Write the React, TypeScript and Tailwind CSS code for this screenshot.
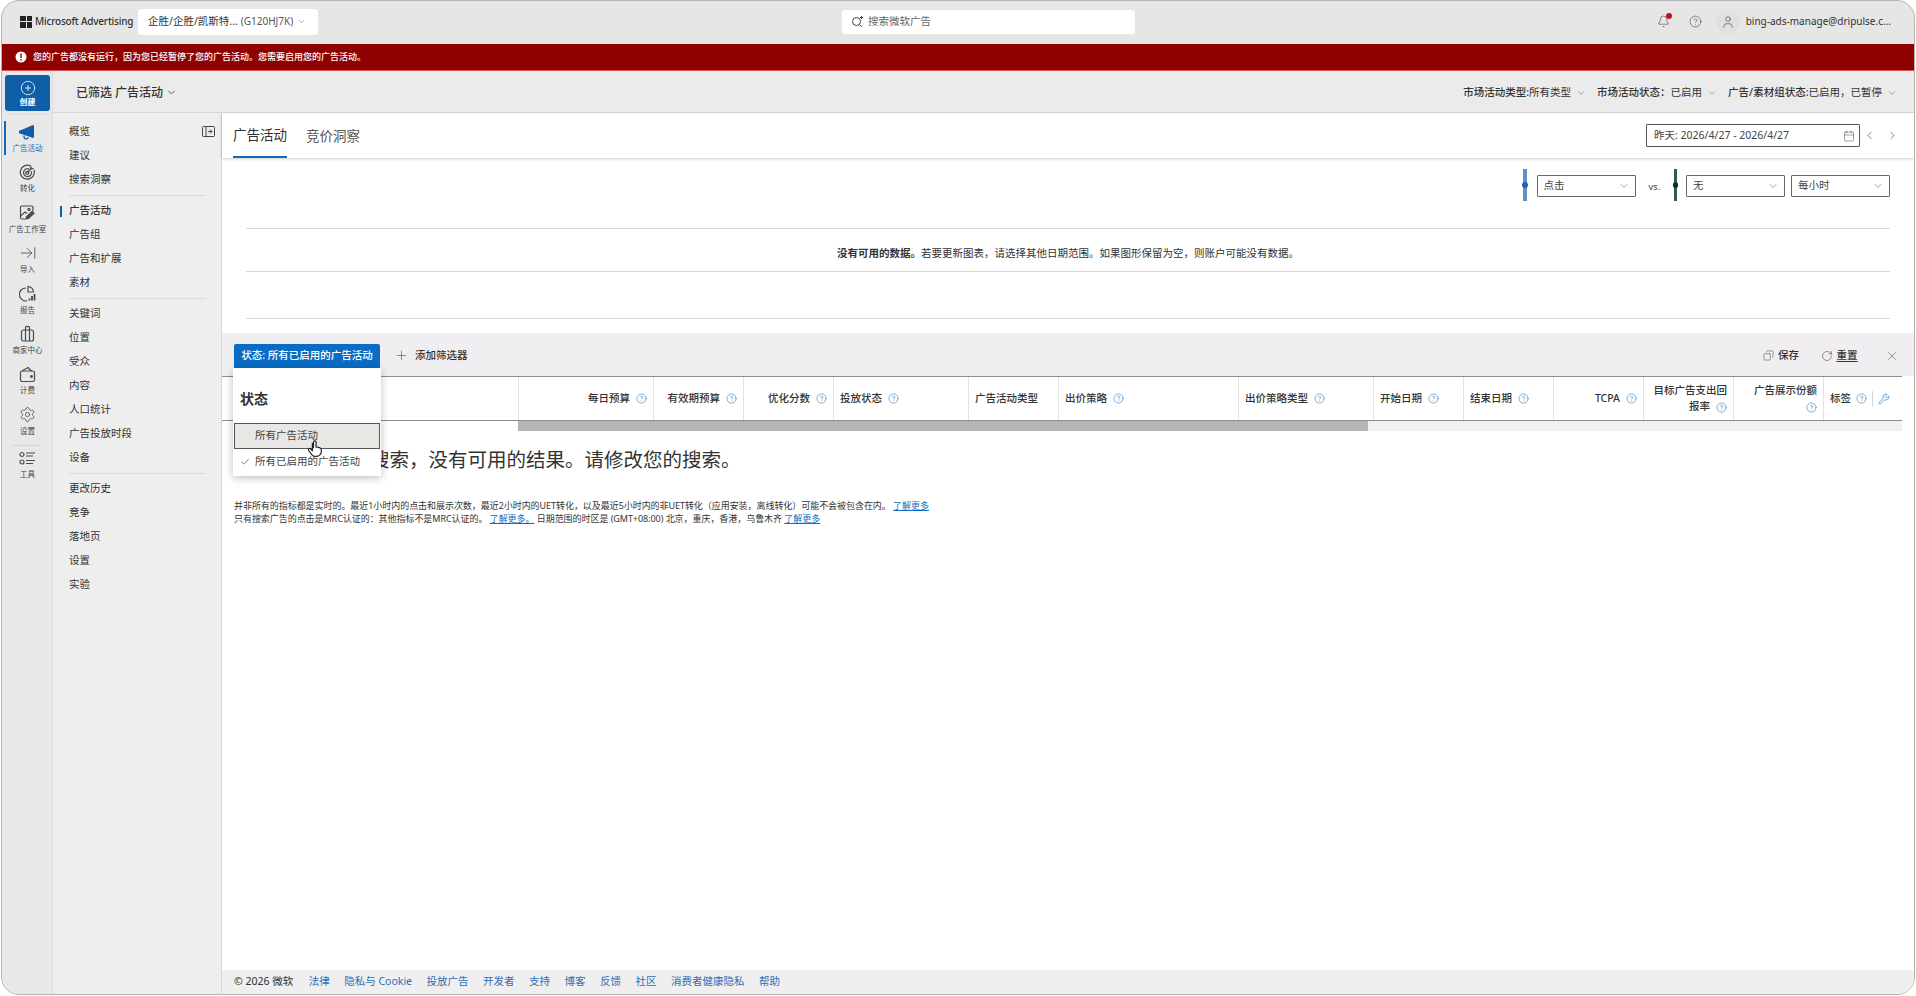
import {
  ArrowRightToLine,
  Bell,
  Calendar,
  Check,
  ChevronDown,
  ChevronLeft,
  ChevronRight,
  CircleHelp,
  CirclePlus,
  Copy,
  Plus,
  RotateCw,
  Settings,
  User,
  Wrench,
  X,
} from 'lucide-react'
import type { ReactNode } from 'react'

// full-width punctuation, kept as escapes so it survives copying around
const COMMA = '\uFF0C'
const COLON = '\uFF1A'
const LP = '\uFF08'
const RP = '\uFF09'

const MegaphoneIcon = () => (
  <svg width="18" height="16" viewBox="0 0 18 16" className="text-[#0f5fa8]">
    <path d="M1 6.5 13.5 1.2a1 1 0 0 1 1.5.9v10.8a1 1 0 0 1-1.5.9L1 9.5a1.5 1.5 0 0 1 0-3Z" fill="currentColor" />
    <path d="M5 11.5v1.3a2.2 2.2 0 0 0 4.3.6" fill="none" stroke="currentColor" strokeWidth="1.3" />
  </svg>
)

const TargetIcon = () => (
  <svg width="17" height="17" viewBox="0 0 17 17" fill="none" stroke="#4a4a4a" strokeWidth="1.2">
    <path d="M12 2.2A7 7 0 1 0 15 6" />
    <path d="M10.4 5A4 4 0 1 0 12.4 7.4" />
    <circle cx="8.2" cy="8.8" r="1.5" />
    <path d="M8.4 8.6 13 4M12 2.6V4.6H14.6" strokeWidth="1.4" />
  </svg>
)

const StudioIcon = () => (
  <svg width="17" height="17" viewBox="0 0 17 17" fill="none" stroke="#4a4a4a" strokeWidth="1.2">
    <path d="M6 15H3a1.5 1.5 0 0 1-1.5-1.5v-10A1.5 1.5 0 0 1 3 2h9.500A1.500 1.500 0 0 1 14 3.500V7" />
    <circle cx="10" cy="5.500" r="1.100" />
    <path d="M1.500 12 6 8l2 1.500" />
    <path d="m7 15 .6-2.400 5.600-5.200 1.800 1.800-5.600 5.200Z" fill="#4a4a4a" />
  </svg>
)

const ReportIcon = () => (
  <svg width="17" height="17" viewBox="0 0 17 17" fill="none" stroke="#4a4a4a" strokeWidth="1.2">
    <path d="M7 3a6.500 6.500 0 1 0 1 12.900" />
    <path d="M9 1.500A6 6 0 0 1 14.500 7H9Z" />
    <path d="M10.500 15.500v-2M13 15.500v-4.500M15.500 15.500V9" strokeWidth="1.800" />
  </svg>
)

const GiftIcon = () => (
  <svg width="15" height="17" viewBox="0 0 15 17" fill="none" stroke="#4a4a4a" strokeWidth="1.2">
    <rect x="1.500" y="5" width="12" height="11" rx="2" />
    <path d="M5.500 5v11M9.500 5v11M5.500 5V2.500a1.200 1.200 0 0 1 2-.8 1.200 1.200 0 0 1 2 .8V5" />
  </svg>
)

const WalletIcon = () => (
  <svg width="17" height="17" viewBox="0 0 17 17" fill="none" stroke="#4a4a4a" strokeWidth="1.2">
    <rect x="1.500" y="5" width="14" height="10.500" rx="1.800" />
    <path d="M3 5 9 1.500 12.500 5" />
    <circle cx="12.500" cy="10.500" r=".8" fill="#4a4a4a" />
  </svg>
)

const ToolsIcon = () => (
  <svg width="17" height="15" viewBox="0 0 17 15" fill="none" stroke="#4a4a4a" strokeWidth="1.2">
    <circle cx="3" cy="3.500" r="2" />
    <circle cx="3" cy="11" r="2" />
    <path d="M7 2h9M7 5h7M7 9.500h9M7 12.500h7" />
  </svg>
)

const CollapseIcon = () => (
  <svg width="13" height="11" viewBox="0 0 13 11" fill="none" stroke="#444" strokeWidth="1" className="absolute top-[13px] left-[149px]">
    <rect x=".5" y=".5" width="12" height="10" rx="1" />
    <path d="M4 .5v10M6 5.500h4M8 3.500l2 2-2 2" />
  </svg>
)

const railItems: { label: string; icon: ReactNode; active?: boolean }[] = [
  { label: '广告活动', icon: <MegaphoneIcon />, active: true },
  { label: '转化', icon: <TargetIcon /> },
  { label: '广告工作室', icon: <StudioIcon /> },
  { label: '导入', icon: <ArrowRightToLine size={18} strokeWidth={1.1} color="#4a4a4a" /> },
  { label: '报告', icon: <ReportIcon /> },
  { label: '商家中心', icon: <GiftIcon /> },
  { label: '计费', icon: <WalletIcon /> },
  { label: '设置', icon: <Settings size={17} strokeWidth={1.1} color="#4a4a4a" /> },
]

const navGroups = [
  ['概览', '建议', '搜索洞察'],
  ['广告活动', '广告组', '广告和扩展', '素材'],
  ['关键词', '位置', '受众', '内容', '人口统计', '广告投放时段', '设备'],
  ['更改历史', '竞争', '落地页', '设置', '实验'],
]

const columns: { width: string; label: string; second?: string; align: 'left' | 'right'; help?: boolean }[] = [
  { width: 'w-[135px]', label: '每日预算', align: 'right', help: true },
  { width: 'w-[90px]', label: '有效期预算', align: 'right', help: true },
  { width: 'w-[90px]', label: '优化分数', align: 'right', help: true },
  { width: 'w-[135px]', label: '投放状态', align: 'left', help: true },
  { width: 'w-[90px]', label: '广告活动类型', align: 'left' },
  { width: 'w-[180px]', label: '出价策略', align: 'left', help: true },
  { width: 'w-[135px]', label: '出价策略类型', align: 'left', help: true },
  { width: 'w-[90px]', label: '开始日期', align: 'left', help: true },
  { width: 'w-[90px]', label: '结束日期', align: 'left', help: true },
  { width: 'w-[90px]', label: 'TCPA', align: 'right', help: true },
  { width: 'w-[90px]', label: '目标广告支出回', second: '报率', align: 'right', help: true },
  { width: 'w-[90px]', label: '广告展示份额', second: '', align: 'right', help: true },
]

const footerLinks = ['法律', '隐私与 Cookie', '投放广告', '开发者', '支持', '博客', '反馈', '社区', '消费者健康隐私', '帮助']

const Help = () => <CircleHelp size={11} strokeWidth={1.3} className="shrink-0 text-[#2b79c2]" />

function Rail() {
  return (
    <div className="flex w-[51px] shrink-0 flex-col border-r border-[#dcdcdc] bg-[#e8e8e8] pt-[4px]">
      <div className="ml-[3px] flex h-[36px] w-[45px] flex-col items-center justify-center rounded-[3px] bg-[#0f5fa8] text-white">
        <CirclePlus size={16} strokeWidth={1.2} />
        <span className="mt-[1px] text-[8px] leading-[10px] font-bold">创建</span>
      </div>
      <div className="mx-[4px] mt-[3px] mb-[4px] border-t border-[#dcdcdc]" />
      {railItems.map((item) => (
        <div key={item.label} className="relative flex h-[40.4px] flex-col items-center pt-[4px] pl-[1px]">
          {item.active && <div className="absolute top-[2px] left-[2px] h-[34px] w-[1.5px] bg-[#0f6cbd]" />}
          <div className="flex h-[18px] items-center">{item.icon}</div>
          <span className={`mt-[2px] text-[7.5px] leading-[10px] ${item.active ? 'text-[#2b6cb0]' : 'text-[#444]'}`}>
            {item.label}
          </span>
        </div>
      ))}
      <div className="mx-[10px] my-[3px] border-t border-[#d6d6d6]" />
      <div className="flex flex-col items-center pt-[2px] pl-[1px]">
        <ToolsIcon />
        <span className="mt-[3px] text-[7.5px] leading-[10px] text-[#444]">工具</span>
      </div>
    </div>
  )
}

function SideNav() {
  return (
    <div className="relative w-[169px] shrink-0 border-r border-[#d8d8d8] bg-[#eeeeee] pt-[7px] pl-[16px] text-[10.5px] text-[#333]">
      <CollapseIcon />
      {navGroups.map((group, i) => (
        <div key={i} className={`w-[137px] ${i > 0 ? 'mt-[3px] border-t border-[#d9d9d9] pt-[3px]' : ''}`}>
          {group.map((name) => (
            <div key={name} className="relative flex h-[24px] items-center">
              {i === 1 && name === '广告活动' && (
                <div className="absolute top-[7px] left-[-9px] h-[11px] w-[2px] bg-[#0f5fa8]" />
              )}
              <span className={i === 1 && name === '广告活动' ? 'font-medium' : ''}>{name}</span>
            </div>
          ))}
        </div>
      ))}
    </div>
  )
}

function Select({ value, width }: { value: string; width: string }) {
  return (
    <div className={`flex h-[22px] ${width} items-center justify-between rounded-[1px] border border-[#666] bg-white pr-[5px] pl-[6px] text-[10.5px] text-[#444]`}>
      <span>{value}</span>
      <ChevronDown size={12} strokeWidth={1} />
    </div>
  )
}

function Legend({ bar, dot }: { bar: string; dot: string }) {
  return (
    <div className={`relative h-[32px] w-[3.5px] ${bar}`}>
      <div className={`absolute top-[13px] left-[-1px] h-[5.500px] w-[5.500px] rounded-full ${dot}`} />
    </div>
  )
}

function Chart() {
  return (
    <div className="h-[175px] bg-white pr-[24px] pl-[24px]">
      <div className="flex h-[70px] items-start justify-end gap-[6px] pt-[11px]">
        <Legend bar="bg-[#5e93c8]" dot="bg-[#1f64a8]" />
        <div className="ml-[4px] pt-[6px]">
          <Select value="点击" width="w-[99px]" />
        </div>
        <div className="w-[26px] pt-[11px] text-center text-[9.5px] text-[#444]">vs.</div>
        <Legend bar="bg-[#35594a]" dot="bg-[#0e3325]" />
        <div className="ml-[3px] pt-[6px]">
          <Select value="无" width="w-[99px]" />
        </div>
        <div className="pt-[6px]">
          <Select value="每小时" width="w-[99px]" />
        </div>
      </div>
      <div className="flex h-[43px] items-center justify-center border-t border-[#d8d8d8] pt-[7px] text-[10.5px] text-[#333]">
        <span className="font-bold">没有可用的数据。</span>
        <span>{`若要更新图表${COMMA}请选择其他日期范围。如果图形保留为空${COMMA}则账户可能没有数据。`}</span>
      </div>
      <div className="h-[47px] border-t border-[#d8d8d8]" />
      <div className="border-t border-[#d8d8d8]" />
    </div>
  )
}

function FilterPopup() {
  return (
    <div className="absolute top-[-8px] left-[11px] z-10 h-[108px] w-[148px] bg-white shadow-[0_2px_8px_rgba(0,0,0,0.25)]">
      <div className="pt-[22px] pl-[7px] text-[14px] leading-[18px] font-bold text-[#333]">状态</div>
      <div className="mx-[1px] mt-[15px] flex h-[26px] items-center border border-[#555] bg-[#e9e7e3] pl-[20px] text-[10.5px] text-[#444]">
        所有广告活动
      </div>
      <div className="flex h-[26px] items-center pl-[7px] text-[10.5px] text-[#444]">
        <Check size={10} strokeWidth={1.5} className="mr-[5px] text-[#333]" />
        所有已启用的广告活动
      </div>
      <svg width="18" height="19" viewBox="0 0 24 24" stroke="#222" strokeWidth="1.6" strokeLinecap="round" strokeLinejoin="round" className="absolute top-[71px] left-[73px]">
        <path
          fill="#fff"
          d="M10 11V3.500a1.700 1.700 0 0 1 3.400 0V10l4.500.8a3 3 0 0 1 2.500 3V16a6.500 6.500 0 0 1-6.500 6.500h-1.500a6 6 0 0 1-4.800-2.400L3.700 15a1.800 1.800 0 0 1 2.800-2.300L8.500 15V5"
        />
      </svg>
    </div>
  )
}

function FilterBar() {
  return (
    <div className="relative flex h-[43px] items-center bg-[#f0eef0] pt-[2px] pr-[15px] pl-[12px] text-[10.5px] text-[#333]">
      <div className="flex h-[24px] w-[146px] items-center justify-center rounded-t-[2px] bg-[#0a6cc4] font-medium whitespace-nowrap text-white shadow-[0_2px_0_#bfe2f7]">
        状态: 所有已启用的广告活动
      </div>
      <Plus size={15} strokeWidth={1} className="ml-[14px] text-[#555]" />
      <span className="ml-[6px] font-medium">添加筛选器</span>
      <div className="ml-auto flex items-center font-medium">
        <Copy size={11} strokeWidth={1} className="mr-[4px] -scale-x-100" />
        <span>保存</span>
        <RotateCw size={12} strokeWidth={1} className="mr-[4px] ml-[21.500px]" />
        <span className="underline underline-offset-2">重置</span>
        <X size={14} strokeWidth={1} className="ml-[27.500px] text-[#555]" />
      </div>
    </div>
  )
}

function TableHeader() {
  return (
    <div className="mr-[12px] flex h-[45px] border-y border-[#8c8c8c] bg-white text-[10.5px] font-medium text-[#333]">
      <div className="w-[296px] shrink-0" />
      {columns.map((col) =>
        col.second === undefined ? (
          <div
            key={col.label}
            className={`flex ${col.width} shrink-0 items-center border-l border-[#e2e2e2] px-[6px] ${col.align === 'right' ? 'justify-end' : ''}`}
          >
            <span className="mr-[6px] whitespace-nowrap">{col.label}</span>
            {col.help && <Help />}
          </div>
        ) : (
          <div key={col.label} className={`flex ${col.width} shrink-0 flex-col justify-center border-l border-[#e2e2e2] px-[6px] text-right`}>
            <div className="leading-[15px] whitespace-nowrap">{col.label}</div>
            <div className="mt-[2px] flex h-[15px] items-center justify-end gap-[6px]">
              {col.second && <span>{col.second}</span>}
              <Help />
            </div>
          </div>
        ),
      )}
      <div className="flex flex-1 items-center border-l border-[#e2e2e2] pl-[6px]">
        <span className="mr-[5px]">标签</span>
        <Help />
        <div className="ml-[5px] h-[16px] border-l border-[#d8d8d8]" />
        <Wrench size={12} strokeWidth={1.4} className="ml-[5px] text-[#2b79c2]" />
      </div>
    </div>
  )
}

function Scrollbar() {
  return (
    <div className="mr-[12px] flex h-[10px] pl-[296px]">
      <div className="flex flex-1 bg-[#f0f0f0]">
        <div className="w-[850px] bg-[#b5b5b5]" />
      </div>
    </div>
  )
}

function Notes() {
  const link = 'text-[#0f6cbd] underline'
  return (
    <div className="mt-[26px] pl-[12px] text-[9px] leading-[13px] tracking-[-0.05px] text-[#333]">
      <div>
        {`并非所有的指标都是实时的。最近1小时内的点击和展示次数${COMMA}最近2小时内的UET转化${COMMA}以及最近5小时内的非UET转化${LP}应用安装${COMMA}离线转化${RP}可能不会被包含在内。 `}
        <a className={link}>了解更多</a>
      </div>
      <div>
        {`只有搜索广告的点击是MRC认证的${COLON}其他指标不是MRC认证的。 `}
        <a className={link}>了解更多。</a>
        {` 日期范围的时区是 (GMT+08:00) 北京${COMMA}重庆${COMMA}香港${COMMA}乌鲁木齐 `}
        <a className={link}>了解更多</a>
      </div>
    </div>
  )
}

export default function App() {
  return (
    <div className="h-[996px] w-[1916px] overflow-hidden bg-white px-[1px] pb-[1px] font-['Noto_Sans','Noto_Sans_CJK_SC',sans-serif]">
      <div className="flex h-full flex-col overflow-hidden rounded-[18px] border border-[#b5b5b5] bg-[#e6e6e6]">
        {/* top bar */}
        <div className="relative flex h-[43px] shrink-0 items-center pb-[2px] text-[#333]">
          <div className="ml-[18px] grid h-[12px] w-[12px] grid-cols-2 gap-[1px]">
            <div className="bg-[#222]" />
            <div className="bg-[#222]" />
            <div className="bg-[#222]" />
            <div className="bg-[#222]" />
          </div>
          <span className="ml-[3px] w-[103px] text-[10px] font-medium tracking-[-0.2px] whitespace-nowrap">Microsoft Advertising</span>
          <div className="flex h-[26px] w-[180px] items-center rounded-[3px] bg-white pl-[10px] text-[10.5px] whitespace-nowrap">
            企胜/企胜/凯斯特... <span className="ml-[3px] text-[10px] text-[#555]">(G120HJ7K)</span>
            <ChevronDown size={9} strokeWidth={1} className="ml-[4px]" />
          </div>
          <div className="ml-[524px] flex h-[24px] w-[293px] items-center rounded-[3px] bg-white pl-[9px] text-[10.5px] text-[#666]">
            <svg width="13" height="13" viewBox="0 0 13 13" fill="none" stroke="#444" strokeWidth="1" className="mr-[4px]">
              <circle cx="5.500" cy="6.500" r="4" />
              <path d="m8.500 9.500 2.500 2.500M10.500 1v3M9 2.500h3" />
            </svg>
            搜索微软广告
          </div>
          <div className="ml-auto flex items-center pr-[23px]">
            <div className="relative">
              <Bell size={13} strokeWidth={1} />
              <div className="absolute top-[-2px] right-[-2px] h-[5.500px] w-[5.500px] rounded-full bg-[#c50f1f]" />
            </div>
            <CircleHelp size={13} strokeWidth={1} className="ml-[19px]" />
            <div className="ml-[14px] flex h-[24px] w-[24px] items-center justify-center rounded-full bg-[#e0e0e0]">
              <User size={14} strokeWidth={1} />
            </div>
            <span className="ml-[6px] text-[10px] whitespace-nowrap">bing-ads-manage@dripulse.c...</span>
          </div>
        </div>

        {/* warning */}
        <div className="flex h-[27px] shrink-0 items-center border-b border-[#d9534f] bg-[#8f0000] pl-[13px] text-[9px] font-medium text-white">
          <svg width="12" height="12" viewBox="0 0 12 12" className="mr-[6px]">
            <circle cx="6" cy="6" r="5.500" fill="#fff" />
            <rect x="5.300" y="2.500" width="1.400" height="4.500" fill="#8f0000" />
            <rect x="5.300" y="8" width="1.400" height="1.400" fill="#8f0000" />
          </svg>
          {`您的广告都没有运行${COMMA}因为您已经暂停了您的广告活动。您需要启用您的广告活动。`}
        </div>

        <div className="flex min-h-0 flex-1">
          <Rail />
          <div className="flex min-w-0 flex-1 flex-col">
            {/* page header */}
            <div className="flex h-[42px] shrink-0 items-center border-b border-[#d8d8d8] bg-[#ebebeb] pt-[2px] pr-[17px] pl-[23px] text-[#333]">
              <span className="text-[12px] font-medium">已筛选 广告活动</span>
              <ChevronDown size={11} strokeWidth={1.6} className="ml-[3px] text-[#222]" />
              <div className="ml-auto flex items-center gap-[11px] text-[10.5px]">
                <div className="flex items-center gap-[5px]">
                  <span><b className="font-medium">市场活动类型:</b>所有类型</span>
                  <ChevronDown size={10} strokeWidth={1} />
                </div>
                <div className="flex items-center gap-[5px]">
                  <span><b className="font-medium">{`市场活动状态${COLON}`}</b>已启用</span>
                  <ChevronDown size={10} strokeWidth={1} />
                </div>
                <div className="flex items-center gap-[5px]">
                  <span><b className="font-medium">广告/素材组状态:</b>{`已启用${COMMA}已暂停`}</span>
                  <ChevronDown size={10} strokeWidth={1} />
                </div>
              </div>
            </div>

            <div className="flex min-h-0 flex-1">
              <SideNav />
              <div className="flex min-w-0 flex-1 flex-col bg-white">
                {/* tabs */}
                <div className="relative z-[1] flex h-[45px] shrink-0 items-center bg-white pr-[15px] pl-[11px] shadow-[0_1px_3px_rgba(0,0,0,0.2)]">
                  <div className="flex h-full items-center border-b-2 border-[#0f6cbd] pt-[2px] text-[13.5px] text-[#333]">广告活动</div>
                  <div className="ml-[19px] pt-[2px] text-[13.5px] text-[#555]">竞价洞察</div>
                  <div className="ml-auto flex h-[23px] w-[214px] items-center justify-between rounded-[1px] border border-[#555] pr-[4px] pl-[7px] text-[10.5px] text-[#444]">
                    昨天: 2026/4/27 - 2026/4/27
                    <Calendar size={12} strokeWidth={1} />
                  </div>
                  <ChevronLeft size={13} strokeWidth={1.2} className="ml-[3px] text-[#444]" />
                  <ChevronRight size={13} strokeWidth={1.2} className="ml-[10px] text-[#444]" />
                </div>

                <Chart />
                <FilterBar />
                <div className="relative">
                  <FilterPopup />
                  <TableHeader />
                  <Scrollbar />
                </div>

                {/* the start of this line sits behind the popup, only the visible part is written */}
                <div className="mt-[16px] pl-[148px] text-[19.5px] leading-[26px] whitespace-nowrap text-[#333]">
                  {`搜索${COMMA}没有可用的结果。请修改您的搜索。`}
                </div>
                <Notes />

                {/* footer */}
                <div className="mt-auto flex h-[24px] shrink-0 items-center gap-[14.500px] bg-[#f0eff0] pl-[12px] text-[10.5px] text-[#2f6db5]">
                  <span className="mr-[1px] text-[#333]">© 2026 微软</span>
                  {footerLinks.map((name) => (
                    <a key={name}>{name}</a>
                  ))}
                </div>
              </div>
            </div>
          </div>
        </div>
      </div>
    </div>
  )
}
